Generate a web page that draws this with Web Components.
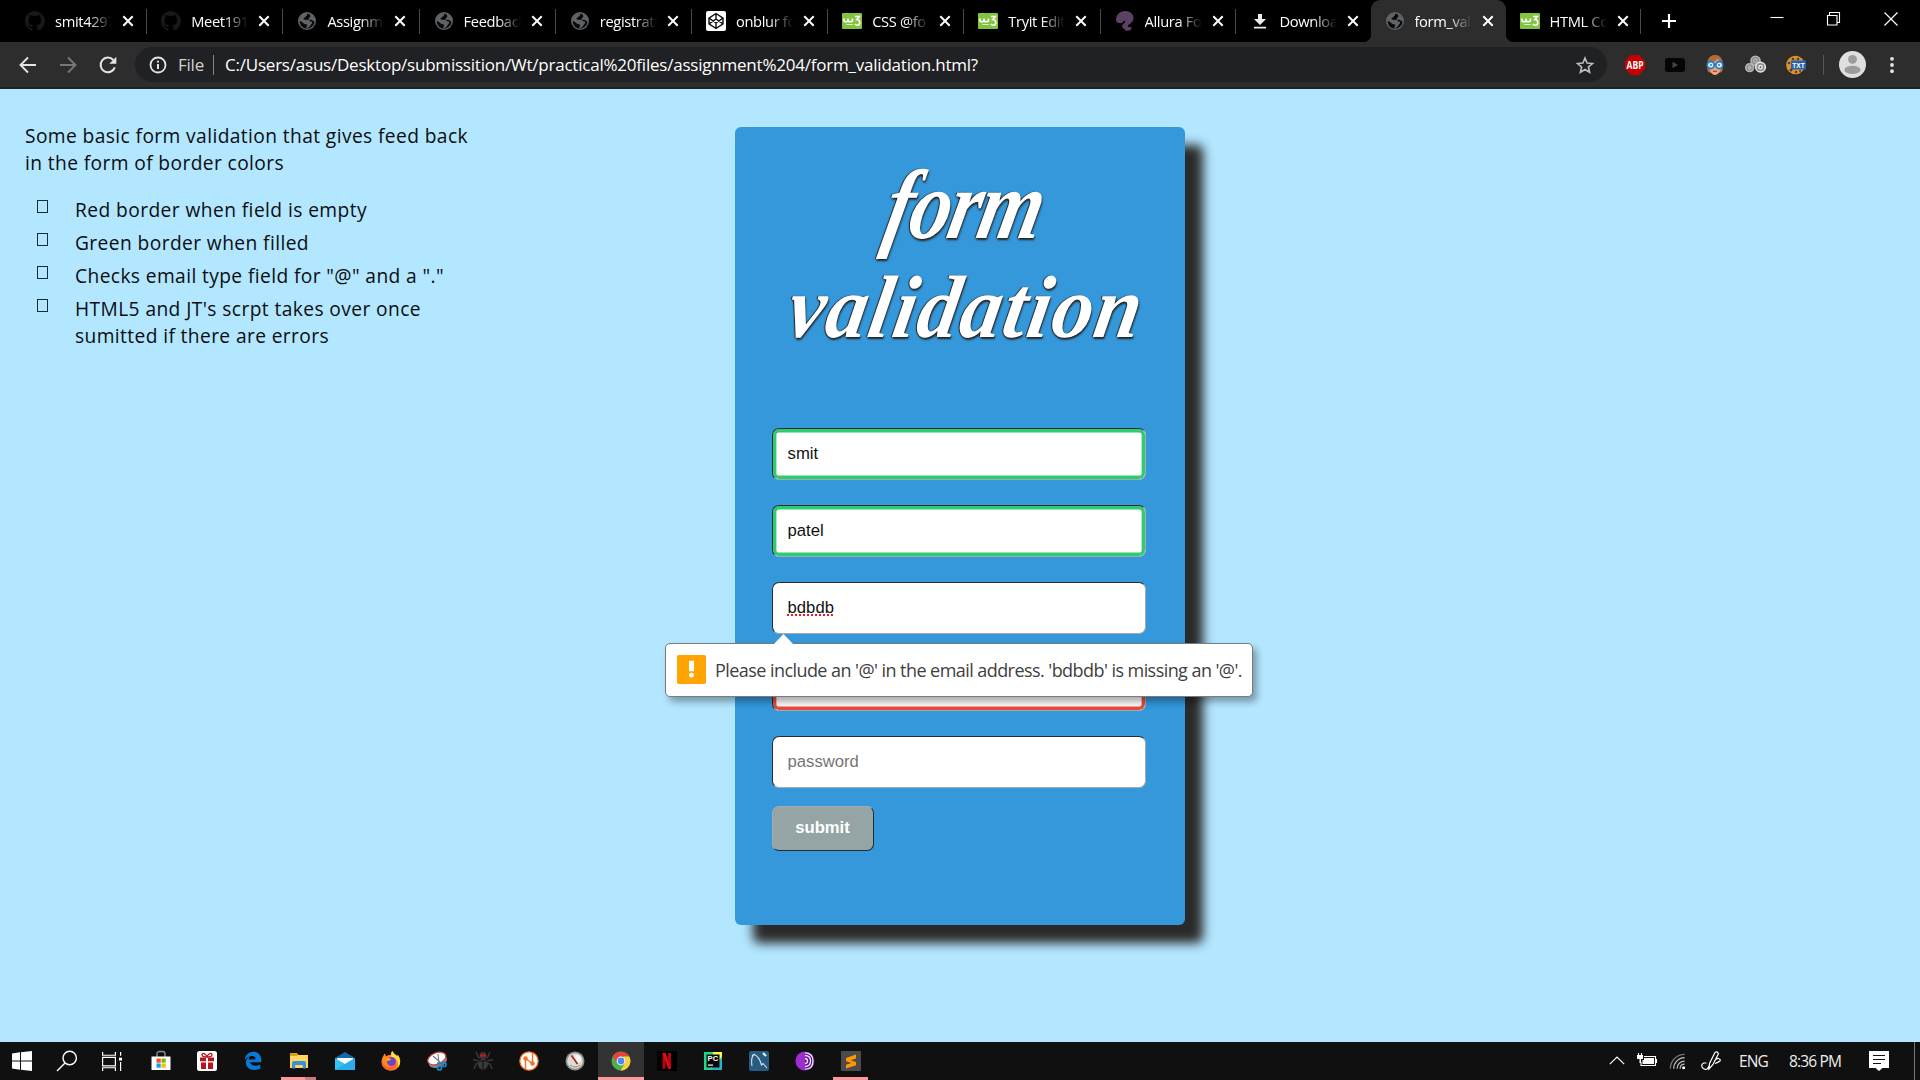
<!DOCTYPE html>
<html lang="en"><head><meta charset="utf-8"><title>form_validation</title>
<style>
html,body{margin:0;height:100%;overflow:hidden}
body{font-family:"Open Sans","Noto Sans",sans-serif}
</style></head><body>
<desktop-screen></desktop-screen>
<script>
const S='fill="none" stroke="currentColor"';
const ICONS={
github:`<path fill="#17191c" fill-rule="evenodd" d="M10 0A10 10 0 0 0 6.800 19.500c.5.1.7-.2.700-.500v-1.800c-2.800.6-3.400-1.300-3.400-1.300-.4-1.100-1.100-1.500-1.100-1.500-.9-.6.1-.6.1-.6 1 .1 1.500 1 1.500 1 .9 1.500 2.300 1.100 2.900.8.1-.600.300-1.100.600-1.300-2.200-.3-4.500-1.100-4.500-5 0-1.100.4-2 1-2.700-.1-.2-.4-1.300.1-2.600 0 0 .8-.3 2.700 1a9.600 9.600 0 0 1 5 0c1.900-1.300 2.700-1 2.700-1 .5 1.300.2 2.400.1 2.600.6.7 1 1.600 1 2.700 0 3.900-2.300 4.700-4.600 5 .4.3.7.9.7 1.900V19c0 .3.2.600.700.500A10 10 0 0 0 10 0z"/>`,
globe:`<circle cx="10" cy="10" r="9" fill="#5f6368"/><path fill="#0a0a0b" d="M10.500 2.500c-1 1.200.3 2-1.200 2.600-1.200.4-.8 1.700-2.300 1.800-1 .1-.2 1.800.8 1.900h3.700c1.200 0 1 2 2.500 1.800 1.600-.2 1.300 1.500.5 2.400-1 1-1.500 2.800-3 3.600-1.200.6-2 1.100-2.200-.1-.2-1.100 1.700-1.600.8-2.700-.8-1-2.500-.2-3.400-1.300-1-1.200-2.700-2.200-3.900-2.500 0 5 3.400 7.500 7.200 7.500s7.500-3 7.500-7.300c-1.700.3-1.800-1-3.100-1.400-1-.3-2.300.7-2.700-.6-.3-1.300 1.500-1.600 1.700-2.900.2-1.200-1.500-2.400-2.900-2.800z"/>`,
codepen:`<rect width="20" height="20" rx="2" fill="#fff"/><g fill="none" stroke="#111" stroke-width="1.400" stroke-linejoin="round"><path d="M10 2.500l7 4.700v5.600l-7 4.700-7-4.700V7.200zM3 7.200l7 4.800 7-4.800M3 12.800l7-4.800 7 4.800M10 2.500V8M10 12v5.500"/></g>`,
w3:`<rect y="2" width="20" height="16" rx="1" fill="#84c341"/><path fill="none" stroke="#fff" stroke-width="1.600" d="M2 7.500v1.700q0 1.500 2 1.500t2-1.500V7.500v1.700q0 1.500 2.200 1.500t2.300-1.500V7.500M13 5.500h4.300L14.800 8.500q3 .2 3 2.900t-2.500 2.800q-1.500 0-2.500-1.200"/><path stroke="#d7ecc0" stroke-width="1" d="M4 13.500h7"/>`,
squirrel:`<path fill="#5a4264" d="M1 9C1 3.500 5 0 10 0c5.500 0 8.500 3.500 8.500 7.200 0 2.800-2 4.600-4.500 6.200-2.400 1.500-1 2.600 2.800 2.900l-1 2.700-4.500 1-3.600-3.200c-1.400-1.700-.4-3.300 1.800-4.800 1-1.400.6-2.600-.8-2.200-.5 1.500-2 2.700-3.800 2.500-2 0-3.500-1-3.900-3.300z"/>`,
download:`<path fill="#ececec" d="M8 3h4v5h4L10 14 4 8h4zM4 15.700h12v1.800H4z"/>`,
x:`<path ${S} stroke-width="2" d="M5.300 5.300l9.400 9.400M14.700 5.300l-9.400 9.400"/>`,
plus:`<path ${S} stroke-width="2.400" d="M10 2.200v15.600M2.200 10h15.600"/>`,
min:`<path ${S} stroke-width="1.100" d="M3.500 8.500h13"/>`,
restore:`<path ${S} stroke-width="1.100" d="M3.500 6.500h9.500v9.500H3.500zM5.500 6V3.500H15.500v10h-2"/>`,
winx:`<path ${S} stroke-width="1.200" d="M3.500 3.500l13 13M16.500 3.500l-13 13"/>`,
back:`<path ${S} stroke-width="1.900" d="M18 10H3M10 2.500L2.500 10l7.500 7.500"/>`,
fwd:`<path ${S} stroke-width="1.900" d="M2 10h15M10 2.500l7.500 7.500-7.500 7.500"/>`,
reload:`<path ${S} stroke-width="2" d="M16.800 12.300A7.300 7.300 0 1 1 15.300 5"/><path fill="currentColor" d="M18.300 1.800v7h-7z"/>`,
info:`<circle cx="10" cy="10" r="7.500" ${S} stroke-width="1.800"/><path ${S} stroke-width="2" d="M10 9v5M10 5.700v1.900"/>`,
star:`<path fill="none" stroke="#bcbdbf" stroke-width="1.600" d="M10 3l2.100 5 5.400.5-4.100 3.500 1.200 5.300-4.600-2.800-4.600 2.800L6.600 12 2.500 8.500l5.400-.5z"/>`,
abp:`<path fill="#c80000" d="M6 0h8l6 6v8l-6 6H6l-6-6V6z"/><text x="10" y="13.700" text-anchor="middle" font-family="Open Sans" font-weight="700" font-size="10" textLength="17" lengthAdjust="spacingAndGlyphs" fill="#fff">ABP</text>`,
yt:`<rect y="3" width="20" height="14" rx="3" fill="#050505"/><path fill="#444" d="M7.500 6.800v6.400l5.500-3.200z"/>`,
girl:`<path fill="#b26a3c" d="M3 17C.5 8 2.500 0 10 0s9.500 8 7 17l-7 2z"/><path fill="#e9a57e" d="M4.500 8Q11 7 13 3.500L16 9v5q-2.500 6-6 6t-5.500-6z"/><g fill="#dcefff" stroke="#267ac3" stroke-width="1.800"><circle cx="5.700" cy="10" r="3.500"/><circle cx="14.300" cy="10" r="3.500"/></g><path stroke="#c33" stroke-width="1.200" d="M8 16.300h4"/><circle cx="6" cy="10" r="1" fill="#267ac3"/><circle cx="14" cy="10" r="1" fill="#267ac3"/>`,
swirl:`<g fill="#8d8d8d" stroke="#b5b5b5" stroke-width="1.500"><circle cx="10" cy="6.500" r="4.300"/><circle cx="10" cy="6.500" r="1.500" fill="#555"/><circle cx="4.500" cy="13" r="3.700"/><circle cx="4.500" cy="13" r="1" fill="#555"/><circle cx="14.800" cy="12.500" r="4.600" stroke="#e5e5e5"/><circle cx="14.800" cy="12.500" r="1.600" stroke="#e5e5e5" fill="#555"/></g>`,
txt:`<circle cx="9.500" cy="10" r="9.300" fill="#dd922e"/><g fill="#55401e"><circle cx="7" cy="4" r="1.300"/><circle cx="12" cy="4" r="1.300"/><circle cx="3" cy="8" r="1.300"/><circle cx="5" cy="15" r="1.500"/><circle cx="10" cy="17" r="1.300"/><circle cx="14" cy="16" r="1"/></g><rect x="5" y="5.500" width="15" height="9" fill="#2862ae"/><text x="12.500" y="12.700" text-anchor="middle" font-family="Liberation Sans" font-weight="700" font-size="7.500" textLength="12.500" lengthAdjust="spacingAndGlyphs" fill="#fff">TXT</text>`,
avatar:`<circle cx="10" cy="10" r="10" fill="#dfdfdf"/><circle cx="10" cy="6.200" r="3.300" fill="#9c9c9c"/><ellipse cx="10" cy="14" rx="6" ry="3" fill="#9c9c9c"/>`,
dots:`<g fill="currentColor"><circle cx="10" cy="3.800" r="1.900"/><circle cx="10" cy="10" r="1.900"/><circle cx="10" cy="16.200" r="1.900"/></g>`,
win:`<path fill="#fff" d="M0 2.500l8-1.200v8.200H0zM9 1.200L20 0v9.500H9zM0 10.500h8v8.300l-8-1.200zM9 10.500h11V20L9 18.800z"/>`,
search:`<circle cx="12.700" cy="7" r="6.700" ${S} stroke-width="1.400"/><path ${S} stroke-width="1.400" d="M8 12L0 20"/>`,
task:`<path ${S} stroke-width="1.200" d="M.6 0v3.400h12.800V0M.6 5.600h12.800v9H.6zM.6 20v-3.400h12.800V20M18.600 0v4M18.600 10.500V20"/><rect x="17" y="6" width="3" height="3" fill="#fff"/>`,
store:`<path fill="none" stroke="#8d8d8d" stroke-width="1.400" d="M6 6V3q0-2.500 2.500-2.500h3Q14 .5 14 3v3"/><path fill="#fff" d="M.5 5.500h19V19H.5z"/><path fill="#f25022" d="M5.500 7.500h4.200v4.200H5.500z"/><path fill="#7fba00" d="M10.500 7.500h4.200v4.200h-4.200z"/><path fill="#00a4ef" d="M5.500 12.500h4.200v4.200H5.500z"/><path fill="#ffb900" d="M10.500 12.500h4.200v4.200h-4.200z"/>`,
gift:`<rect width="20" height="20" rx="2.500" fill="#fff"/><path fill="#b8141b" d="M3 6.500h6v3.700H3zM11 6.500h6v3.700h-6zM4 11.500h5V18H4zM11 11.500h5V18h-5z"/><path fill="none" stroke="#b8141b" stroke-width="1.300" d="M10 6Q5 6 5 3.700C5 1.500 9 2 10 6q5 0 5-2.300C15 1.500 11 2 10 6z"/>`,
edge:`<path fill="#0a78d6" d="M1.800 8.900C2.500 3.500 6 .8 10.300.8c4.800 0 8 3.400 8 8.400v2.100H7.200c.2 3.200 5.900 4.600 10 2.100v4.100c-5.800 3.200-14.400 1.100-14.400-5.700 0-2.800 1.600-5.200 4.300-6.500-1 1.200-1.200 1.900-1.200 3.100h6.800C12.700 3.200 5.300 4.100 1.800 8.900z"/>`,
folder:`<path fill="#d9a010" d="M1 2h7l2 2.500v3H1z"/><path fill="#ffd75e" d="M1 5h6.500L9 4h10v13H1z"/><path fill="#3a8fdd" d="M3 17.500v-5.300Q3 10 5 10h10q2 0 2 2v5.500h-3.200V14H6.200v3.500z"/>`,
mail:`<path fill="#1466b0" d="M0 7L10 1l10 6v3H0z"/><path fill="#fff" d="M2 7h16v6H2z"/><path fill="#36c2f5" d="M0 7l10 6 10-6v12H0z"/><path fill="#2196e0" d="M0 19l13-8 7-4v12z" opacity=".5"/>`,
firefox:`<path fill="#ff8b16" d="M3.500 2.500l2 3C7 3.500 9 4 10 4c-.5-1.500 0-3 1.500-4 .8 3 4 3.500 4.500 5.500.8-.3.700-1.500.500-2 6 8 1 16-6.500 16S-1.500 13 1.500 6.500z"/><path fill="#ffda43" d="M11.500 0c.8 3 4 3.500 4.500 5.500.8-.3.700-1.500.500-2 4 5 3 10 .5 13 .5-4 0-8-5.500-9.500-2-1.500-1.500-5 0-7z"/><circle cx="10.500" cy="10.500" r="4.500" fill="#7142c8"/><path fill="#ff5b3a" d="M1 9c1 6 6 8.500 10 7 3-1 4-3 4-4 1 5-3 7.800-6.500 7.500C3.500 19 .5 14 1 9z"/><path fill="#ffb51e" d="M5 8c2-1.500 4-.7 5.500 0-1.500.5-2 2-3.700 2z"/>`,
snip:`<ellipse cx="10" cy="10.500" rx="9.500" ry="6" transform="rotate(-22 10 8)" fill="#8b8b8b"/><ellipse cx="10" cy="7.500" rx="9.500" ry="5.700" transform="rotate(-22 10 8)" fill="#fff" stroke="#c94645" stroke-width="1.300"/><path fill="none" stroke="#777" stroke-width="1.100" d="M6 5l8 7M11 3l1 9"/><g fill="none" stroke="#1c83c4" stroke-width="1.700"><circle cx="12.500" cy="17" r="2"/><circle cx="17" cy="13.500" r="2"/><path d="M10 12l6 1"/></g>`,
bug:`<path fill="none" stroke="#393939" stroke-width="1.500" d="M3 1l2.500 5.500L7 7M17 1l-2.500 5.500L13 7M0 8.500L6 10M20 8.500L14 10M1 18l2-5 4-1.500M19 18l-2-5-4-1.500"/><ellipse cx="10" cy="13" rx="5" ry="5.500" fill="#3b3b3b"/><circle cx="10" cy="4.500" r="3.500" fill="#443030"/><circle cx="8.500" cy="4.500" r="1.200" fill="#d21b1b"/><circle cx="11.500" cy="4.500" r="1.200" fill="#d21b1b"/><path stroke="#111" d="M10 9v9M5 10h10"/>`,
nodes:`<circle cx="10" cy="10" r="9.200" fill="#fff"/><path fill="none" stroke="#f36f21" stroke-width="1.400" d="M6.500 18V7.500l7 5V2"/><circle cx="6.500" cy="7.500" r="2.200" fill="#f36f21"/><circle cx="13.500" cy="12.500" r="2.200" fill="#f36f21"/><circle cx="10" cy="10" r="9.200" fill="none" stroke="#f36f21" stroke-width="1.200"/>`,
gauge:`<circle cx="10" cy="10" r="9.500" fill="#8d8d8d"/><circle cx="10" cy="10" r="7.800" fill="#dedbd3"/><circle cx="12" cy="8" r="4" fill="#f5f5f2"/><path stroke="#b7241c" stroke-width="1.900" d="M6.500 4.500l6 8.500"/><path stroke="#888" fill="none" d="M5 14q5 4 10 0"/>`,
chrome:`<circle cx="10" cy="10" r="9.500" fill="#4caf50"/><path fill="#e6443a" d="M1.800 5.200A9.500 9.500 0 0 1 18.200 5.500H10L6 12.200z"/><path fill="#fdd03b" d="M18.200 5.500A9.500 9.500 0 0 1 9.500 19.500L14 12.200 12.500 5.500z"/><circle cx="10" cy="10" r="4.400" fill="#fff"/><circle cx="10" cy="10" r="3.400" fill="#4a8af4"/>`,
netflix:`<rect width="20" height="20" fill="#000"/><path fill="#b1060f" d="M5.500 2h3v15.500l-3 .5zM11 2h3v16l-3-.5z"/><path fill="#e50914" d="M5.500 2h3L14 18l-3-.5z"/>`,
pycharm:`<path fill="#21d789" d="M1 1h14L9 19H1z"/><path fill="#fcf84a" d="M10 1h9v9L8 19z"/><path fill="#22b8c8" d="M19 6v13H7z"/><rect x="3.500" y="3.500" width="13" height="13" fill="#080808"/><text x="4.600" y="10.400" font-family="Liberation Sans" font-weight="700" font-size="7.600" fill="#fff">PC</text><path fill="#fff" d="M5 13.500h5v1.200H5z"/>`,
mysql:`<rect width="20" height="20" rx="2" fill="#285b80"/><path fill="none" stroke="#d9e3ea" stroke-width="1.100" d="M3 15C2 8 3 5 5 3.500 9 5 11 8 12.500 14l1.500-1.500 4 4.500M3 4.500L6 3"/><path stroke="#f2f2f2" stroke-width="2" d="M14 2l3 3"/>`,
tor:`<circle cx="10" cy="10" r="9.500" fill="#641298"/><path fill="#9e2ed0" d="M10 .5a9.500 9.500 0 0 0 0 19z"/><g fill="none" stroke="#f2e8f7" stroke-width="1.300"><path d="M10 7.500q2.500 0 2.500 2.500T10 12.500M10 4.500q5.500 0 5.500 5.500T10 15.500M10 1.800q8 0 8 8.200t-8 8.200"/></g>`,
sublime:`<rect width="20" height="20" rx="1" fill="#4b4b4b"/><path fill="#ff9800" d="M5 7l10-3.500v4L9.700 9.200 15 11v3.200L5 17.500v-3.800l5.300-1.700L5 10.200z"/>`,
chev:`<path ${S} stroke-width="1.300" d="M2 13.500L10 5.700l8 7.800"/>`,
battery:`<path ${S} stroke-width="1.100" d="M7 5.500h11.500v9H4V11M19.500 8v4M1.500 2v3M4.500 2v3"/><path fill="#fff" d="M0 4h6v4H4v4H2.500V8H0zM7 7h10v6H5.500V9H7z"/>`,
wifi:`<path fill="none" stroke="#777" stroke-width="1.300" d="M2.500 17.500A15 15 0 0 1 17.500 2.500"/><path fill="none" stroke="#bbb" stroke-width="1.300" d="M6 17.500A11.500 11.500 0 0 1 17.500 6M9.500 17.500a8 8 0 0 1 8-8M12.800 17.500q0-4.700 4.700-4.700"/><circle cx="16.500" cy="16.500" r="1.600" fill="#fff"/>`,
pen:`<path ${S} stroke-width="1.200" d="M5.500 12H3q-3 1-2 4 2 3.500 5 2 1.500-1 2-3M16 .8l1.500 1.700-5.500 11-4 4.500.5-5.500L14 1.500zM13 11q2-4 4.500-3.500 2.500 1 1.500 2.500-2 1.500-5 2.500"/>`,
notif:`<path fill="#fff" d="M0 0h20v17h-6.500L10 20l-3.500-3H0z"/><path stroke="#111" stroke-width="1.100" d="M4 4.500h12M4 8.500h12M4 12.500h8"/>`,
bang:`<rect width="20" height="20" rx="1.200" fill="#ffa400"/><path fill="#fff" d="M8.300 4h3.400v7.200H8.300z"/><circle cx="10" cy="14" r="1.700" fill="#fff"/>`
};
function define(name,html,setup){
  const t=document.createElement('template');t.innerHTML=html;
  customElements.define(name,class extends HTMLElement{
    connectedCallback(){
      if(this.shadowRoot)return;
      this.attachShadow({mode:'open'}).append(t.content.cloneNode(true));
      if(setup)setup(this,this.shadowRoot);
    }
  });
}
/* svg icon: name, size, optional h for non-square artwork */
define('svg-icon','<style>:host{display:block;flex:none}svg{display:block;overflow:visible}</style>',(el,r)=>{
  const w=el.getAttribute('size')||20,h=el.getAttribute('h')||w;
  r.innerHTML+=`<svg width="${w}" height="${h}" viewBox="0 0 20 20" preserveAspectRatio="none">${ICONS[el.getAttribute('name')]}</svg>`;
});
/* single text line whose tracking is adjusted to a given width */
define('fit-text','<style>:host{display:block;white-space:nowrap}span{display:inline-block}</style><span><slot></slot></span>',(el,r)=>{
  const s=r.querySelector('span'),n=el.textContent.length;
  s.style.letterSpacing=(el.getAttribute('w')-s.getBoundingClientRect().width)/n+'px';
});
define('browser-tab',`<style>
:host{display:flex;flex:none;align-items:center;width:136.200px;height:42px;box-sizing:border-box;padding-left:14px;position:relative;color:#fff;font:14.700px "Open Sans",sans-serif}
:host([narrow]){width:135px}
:host(:not([active]))::after{content:"";position:absolute;right:0;top:9px;width:1px;height:25px;background:#4a4a4a}
:host([nosep])::after{display:none}
:host([active]){background:#2d2d2d;border-radius:9px 9px 0 0}
:host([active])::before,:host([active])::after{content:"";position:absolute;bottom:0;width:8px;height:8px}
:host([active])::before{left:-8px;background:radial-gradient(circle at 0 0,transparent 8px,#2d2d2d 8.500px)}
:host([active])::after{right:-8px;background:radial-gradient(circle at 100% 0,transparent 8px,#2d2d2d 8.500px)}
.t{width:57px;margin:0 0 1px 10px;overflow:hidden;white-space:nowrap;letter-spacing:-.35px;-webkit-mask:linear-gradient(90deg,#000 58%,transparent);mask:linear-gradient(90deg,#000 58%,transparent)}
.c{margin-left:6px}</style><span class="i"></span><div class="t"><slot></slot></div><svg-icon class="c" name="x" size="20"></svg-icon>`,(el,r)=>{
  r.querySelector('.i').innerHTML=`<svg-icon name="${el.getAttribute('icon')}" size="20"></svg-icon>`;
});
define('tab-strip',`<style>:host{display:flex;height:42px;background:#000;padding-left:11px;color:#fff;flex:none}
.plus{margin:12px 0 0 19px}.win{margin-left:auto;display:flex;gap:37px;padding:9px 19px 0 0}</style>
<browser-tab icon="github">smit4297</browser-tab><browser-tab icon="github">Meet191</browser-tab><browser-tab icon="globe">Assignme</browser-tab><browser-tab icon="globe">Feedback</browser-tab><browser-tab icon="globe">registrati</browser-tab><browser-tab icon="codepen">onblur fo</browser-tab><browser-tab icon="w3">CSS @fo</browser-tab><browser-tab icon="w3">Tryit Edit</browser-tab><browser-tab icon="squirrel" narrow>Allura Fo</browser-tab><browser-tab icon="download" nosep narrow>Downloa</browser-tab><browser-tab icon="globe" active narrow>form_val</browser-tab><browser-tab icon="w3" narrow>HTML Co</browser-tab>
<svg-icon class="plus" name="plus" size="18"></svg-icon>
<div class="win"><svg-icon name="min" size="20"></svg-icon><svg-icon name="restore" size="20"></svg-icon><svg-icon name="winx" size="20"></svg-icon></div>`);
define('address-bar',`<style>:host{display:flex;align-items:center;box-sizing:border-box;height:47px;background:#2d2d2d;border-bottom:2px solid #1f2023;padding:0 18px;color:#e4e4e4;flex:none;font:17px "Open Sans",sans-serif}
.b{margin-right:20px}.dim{color:#777}
.o{display:flex;align-items:center;width:1474px;height:35px;border-radius:18px;background:#202124;box-sizing:border-box;padding:0 13px;margin-left:-3px}
.s{width:1px;height:20px;background:#85868a;margin:0 11px 0 9px}.u{color:#fff}.star{margin:0 -1px 0 auto}
.e{display:flex;align-items:center;gap:20px;margin-left:18px}.v{width:1px;height:20px;background:#555;margin:0 15px 0 17px}</style>
<svg-icon class="b" name="back" size="20"></svg-icon><svg-icon class="b dim" name="fwd" size="20"></svg-icon><svg-icon class="b" name="reload" size="20"></svg-icon>
<div class="o"><svg-icon name="info" size="20"></svg-icon><fit-text w="26" style="margin-left:10px;color:#d0d1d3">File</fit-text><div class="s"></div><fit-text class="u" w="753">C:/Users/asus/Desktop/submissition/Wt/practical%20files/assignment%204/form_validation.html?</fit-text><svg-icon class="star" name="star" size="20"></svg-icon></div>
<div class="e"><svg-icon name="abp"></svg-icon><svg-icon name="yt"></svg-icon><svg-icon name="girl" size="20"></svg-icon><svg-icon name="swirl" size="21"></svg-icon><svg-icon name="txt"></svg-icon></div><div class="v"></div><svg-icon name="avatar" size="27"></svg-icon><svg-icon name="dots" size="20" style="margin-left:16px"></svg-icon>`);
define('bullet-line',`<style>:host{display:flex;line-height:27px;margin-bottom:6px}i{width:9px;height:11px;border:1px solid #142c38;margin:4px 27px 0 12px;flex:none}</style><i></i><div><slot></slot></div>`);
define('intro-notes',`<style>:host{display:block;width:500px;padding:33px 0 0 25px;font:19.200px/27px "Open Sans",sans-serif;color:#0b0e10}.l{margin-top:20px}</style>
<fit-text w="443">Some basic form validation that gives feed back</fit-text><fit-text w="259">in the form of border colors</fit-text>
<div class="l"><bullet-line><fit-text w="292">Red border when field is empty</fit-text></bullet-line><bullet-line><fit-text w="234">Green border when filled</fit-text></bullet-line><bullet-line><fit-text w="369">Checks email type field for "@" and a "."</fit-text></bullet-line><bullet-line><fit-text w="346">HTML5 and JT's scrpt takes over once</fit-text><fit-text w="254">sumitted if there are errors</fit-text></bullet-line></div>`);
define('form-field',`<style>:host{display:flex;align-items:center;box-sizing:border-box;width:374px;height:52px;margin-bottom:25px;border:1.500px solid;border-color:#222c33 #a4aaae #a4aaae #222c33;border-radius:7px;background:#fff;padding:0 0 1px 14.600px;color:#111;font:16.670px "Liberation Sans",sans-serif}
:host([state=ok]){box-shadow:inset 0 0 0 3.400px #2ecc71}:host([state=bad]){box-shadow:inset 0 0 0 3.400px #e74c3c}:host([placeholder]){color:#757575}
:host([typo]) span{text-decoration:underline dotted #f01818 2px;text-underline-offset:2px;text-decoration-skip-ink:none}</style><span><slot></slot></span>`);
define('validation-bubble',`<style>:host{position:absolute;left:-70px;top:516px;width:588px;height:54px;box-sizing:border-box;background:#fff;border:1px solid #777c80;border-radius:5px;box-shadow:4px 5px 7px rgba(0,0,0,.33);display:flex;align-items:center;padding:0 10px;color:#404040;font:400 18px "Open Sans",sans-serif}
.a{position:absolute;left:107px;top:-10px}.i{margin:-2px 0 0 1px}.m{margin:0 0 0 9px}</style><svg class="a" width="22" height="11"><path d="M0 11L10.500 0 21 11z" fill="#fff"/></svg><svg-icon class="i" name="bang" size="29"></svg-icon><fit-text class="m" w="527">Please include an '@' in the email address. 'bdbdb' is missing an '@'.</fit-text>`);
define('signup-card',`<style>:host{display:block;position:relative;flex:none;box-sizing:border-box;width:450px;height:798px;margin-top:38px;padding:33px 37px;background:#3498db;border-radius:6px;box-shadow:18px 18px 11px #2a2a2a}
h1{margin:0 0 68px;height:200px;color:#fff;font:italic 700 82px/100px "Liberation Serif",serif;text-shadow:1px 2px 2px #222,-1px 0 1px #222}
h1 .f{width:max-content;margin-left:109px;transform:skewX(-12deg) scaleY(1.200);transform-origin:0 74%}
h1 .v{width:max-content;margin-left:13px;transform:skewX(-10deg) scaleY(1.080);transform-origin:0 74%}
button{display:block;width:102px;height:45px;margin-top:-7px;padding:0 1px 1px 0;border:1.500px solid;border-color:#a4aaae #222c33 #222c33 #a4aaae;border-radius:7px;background:#95a5a6;color:#fff;font:700 16.670px "Liberation Sans",sans-serif}</style>
<h1><fit-text class="f" w="181">form</fit-text><fit-text class="v" w="373">validation</fit-text></h1>
<form-field state="ok">smit</form-field><form-field state="ok">patel</form-field><form-field typo>bdbdb</form-field><form-field state="bad"></form-field><form-field placeholder>password</form-field><button>submit</button><validation-bubble></validation-bubble>`);
define('web-page',`<style>:host{display:flex;height:953px;background:#b3e6ff;flex:none}.l{width:735px;flex:none}</style><div class="l"><intro-notes></intro-notes></div><signup-card></signup-card>`);
define('task-item',`<style>:host{display:flex;position:relative;flex:none;align-items:center;justify-content:center;width:46px;height:38px}
:host([run])::after{content:"";position:absolute;bottom:0;left:5px;right:6px;height:3px;background:#ff979d}
:host([group])::after{background:linear-gradient(90deg,#ff979d 69%,#c97b80 69%)}
:host([on]){background:#333}:host([on])::after{left:0;right:0}</style><slot></slot>`);
define('task-bar',`<style>:host{display:flex;height:38px;background:#101010;color:#fff;flex:none;font:15.500px "Open Sans",sans-serif}.r{display:flex;align-items:center;margin-left:auto}</style>
<task-item style="width:44px"><svg-icon name="win"></svg-icon></task-item><task-item><svg-icon name="search"></svg-icon></task-item><task-item style="width:44px"><svg-icon name="task" size="20" h="19"></svg-icon></task-item><div id="apps" style="display:flex;margin-left:4px"></div>
<div class="r"><svg-icon name="chev" size="18"></svg-icon><svg-icon name="battery" size="20" style="margin-left:11px"></svg-icon><svg-icon name="wifi" size="19" style="margin-left:11px"></svg-icon><svg-icon name="pen" size="20" style="margin-left:14px"></svg-icon><fit-text w="29" style="margin-left:18px;color:#eee">ENG</fit-text><fit-text w="52" style="margin-left:21px;color:#eee">8:36 PM</fit-text><svg-icon name="notif" size="20" style="margin-left:28px"></svg-icon><div style="width:1px;height:38px;background:#777;margin:0 5px 0 25px"></div></div>`,(el,r)=>{
  r.getElementById('apps').innerHTML='store gift edge folder mail firefox snip bug nodes gauge chrome netflix pycharm mysql tor sublime'.split(' ').map(n=>`<task-item ${n=='folder'?'run group':n=='chrome'?'run on':n=='sublime'?'run':''}><svg-icon name="${n}"></svg-icon></task-item>`).join('');
});
define('desktop-screen',`<style>:host{display:flex;flex-direction:column;width:1920px;height:1080px;overflow:hidden}</style><tab-strip></tab-strip><address-bar></address-bar><web-page></web-page><task-bar></task-bar>`);
</script></body></html>
